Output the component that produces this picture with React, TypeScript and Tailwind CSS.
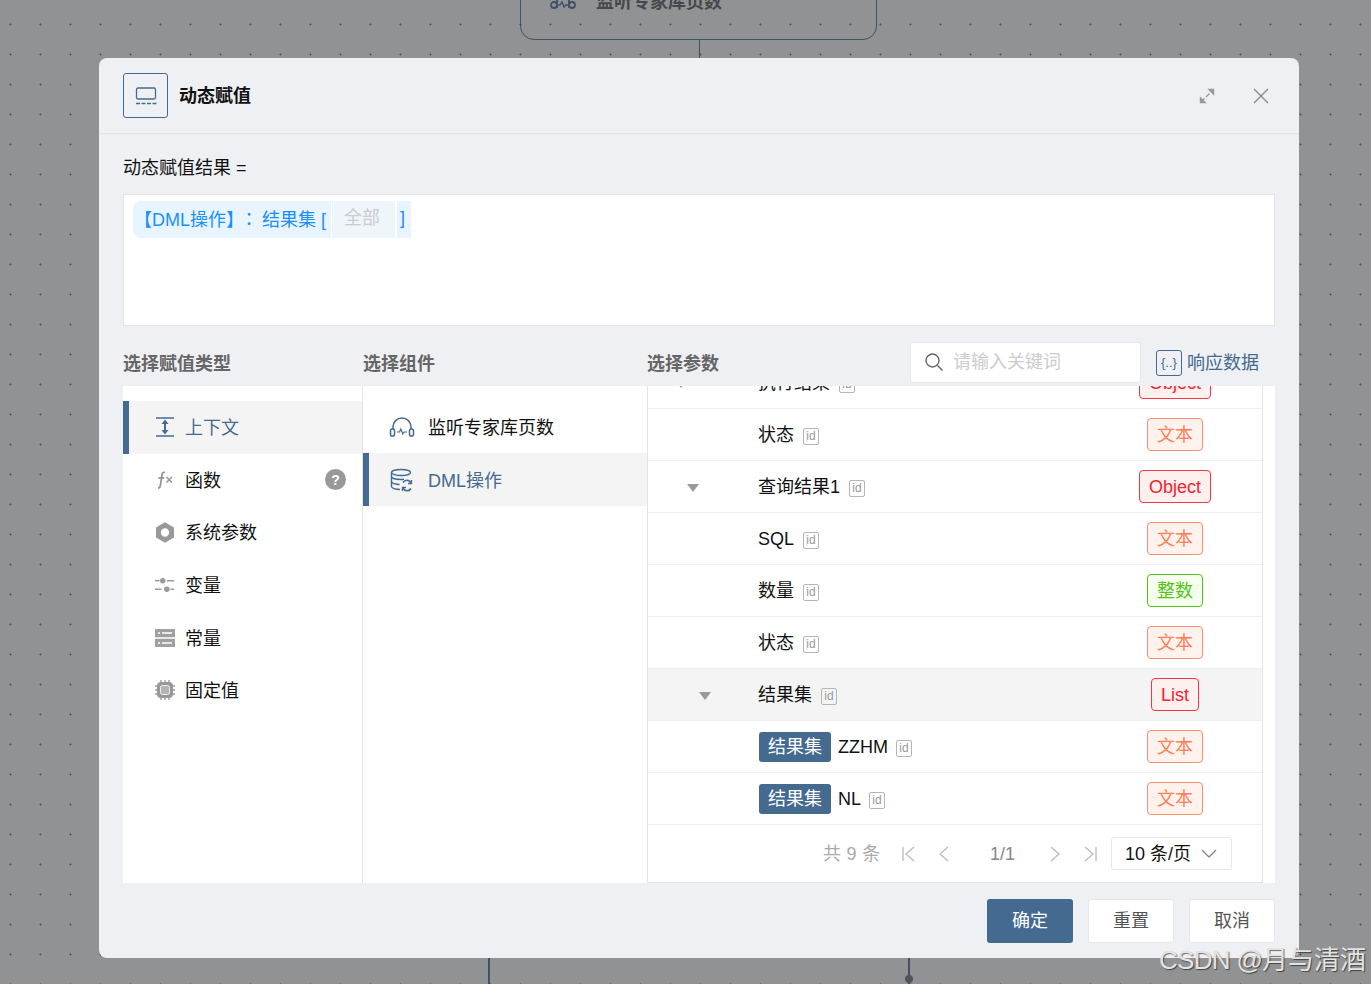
import React from 'react';

type TagKind = 'text' | 'object' | 'int' | 'list';

interface Row {
  name: string;
  tag: TagKind;
  arrow?: 'a' | 'b' | 'c';
  prefix?: boolean;
  active?: boolean;
}

const rows: Row[] = [
  { name: '执行结果', tag: 'object', arrow: 'a' },
  { name: '状态', tag: 'text' },
  { name: '查询结果1', tag: 'object', arrow: 'b' },
  { name: 'SQL', tag: 'text' },
  { name: '数量', tag: 'int' },
  { name: '状态', tag: 'text' },
  { name: '结果集', tag: 'list', arrow: 'c', active: true },
  { name: 'ZZHM', tag: 'text', prefix: true },
  { name: 'NL', tag: 'text', prefix: true },
];

const tagClass: Record<TagKind, string> = {
  text: 'w-14 border-[#ff8f6b] bg-[#fff2ec] text-[#ff7f57]',
  object: 'w-[72px] border-[#f5363f] bg-[#fff0f0] text-[#f5222d]',
  int: 'w-14 border-[#52c41a] bg-[#f6ffed] text-[#52c41a]',
  list: 'w-12 border-[#f5363f] bg-[#fff0f0] text-[#f5222d]',
};

const tagLabel: Record<TagKind, string> = { text: '文本', object: 'Object', int: '整数', list: 'List' };

const arrowPad = { a: 'pl-[27px]', b: 'pl-[39px]', c: 'pl-[51px]' };

const IdIcon = () => (
  <span className="ml-2 mt-[3px] inline-flex h-[17px] w-4 items-center justify-center rounded-[2px] border-[1.5px] border-[#b5b5b5] text-xs leading-none text-[#999]">
    id
  </span>
);

const TypeIcon = ({ name }: { name: string }) => {
  if (name === 'context')
    return (
      <svg width="20" height="22" viewBox="0 0 20 22" fill="none" stroke="#446a90" strokeWidth="1.700">
        <path d="M1 2h18M1 20h18" />
        <path d="M10 6v10" strokeWidth="2" />
        <path d="M6.500 8 10 3.500 13.500 8zM6.500 14l3.500 4.500 3.500-4.500z" fill="#446a90" stroke="none" />
      </svg>
    );
  if (name === 'fx')
    return (
      <svg width="20" height="20" viewBox="0 0 20 20" fill="none" stroke="#999" strokeWidth="1.800">
        <path d="M10 2.500C8 1.800 7.300 3 7 5L5.500 15c-.3 2-1 3-2.500 3M3.500 8H9" />
        <path d="m11.500 7 5.500 5.500M17 7l-5.500 5.500" strokeWidth="1.600" />
      </svg>
    );
  if (name === 'hex')
    return (
      <svg width="20" height="21" viewBox="0 0 20 21">
        <path fillRule="evenodd" fill="#999" d="m10 .3 9 5.200v10l-9 5.200-9-5.200v-10zM10 6.300a4.200 4.200 0 1 0 0 8.400 4.200 4.200 0 0 0 0-8.400z" />
      </svg>
    );
  if (name === 'slider')
    return (
      <svg width="22" height="20" viewBox="0 0 22 20" fill="none" stroke="#999" strokeWidth="1.800">
        <path d="M0 5.300h5M13 5.300h8M0 14.700h7M17 14.700h4" />
        <circle cx="8.500" cy="5.300" r="3" fill="#999" stroke="none" />
        <circle cx="13" cy="14.700" r="3" fill="#999" stroke="none" />
      </svg>
    );
  if (name === 'server')
    return (
      <svg width="20" height="18" viewBox="0 0 20 18">
        <path fill="#a0a0a0" d="M0 0h20v8.300H0zM0 9.700h20V18H0z" />
        <path stroke="#fff" strokeWidth="1.500" d="M3 4h2M7 4h10M3 14h2M7 14h10" />
      </svg>
    );
  return (
    <svg width="20" height="20" viewBox="0 0 20 20" fill="none">
      <path stroke="#999" strokeWidth="1.300" d="M6 0v3M10 0v3M14 0v3M6 17v3M10 17v3M14 17v3M0 6h3M0 10h3M0 14h3M17 6h3M17 10h3M17 14h3" />
      <rect x="2" y="2" width="16" height="16" rx="4" fill="#999" />
      <rect x="5.500" y="5.500" width="9" height="9" rx="2" fill="#b5b5b5" stroke="#eee" />
    </svg>
  );
};

const types = [
  { icon: 'context', label: '上下文', active: true },
  { icon: 'fx', label: '函数', help: true },
  { icon: 'hex', label: '系统参数' },
  { icon: 'slider', label: '变量' },
  { icon: 'server', label: '常量' },
  { icon: 'chip', label: '固定值' },
];

const App: React.FC = () => {
  return (
    <div className="relative h-[984px] w-full overflow-hidden bg-[#919294] bg-[radial-gradient(circle_at_10.5px_24.5px,#505256_0.8px,transparent_1.2px)] bg-[length:30px_30px] [font-family:'Liberation_Sans','Noto_Sans_CJK_SC',sans-serif]">
      {/* canvas behind the dialog */}
      <div className="absolute left-[520px] top-[-30px] flex h-[70px] w-[357px] items-end gap-[20px] rounded-b-[14px] border border-[#3f5167] pb-[28px] pl-[29px]">
        <svg width="26" height="14" viewBox="0 0 26 14" fill="none" stroke="#3f5167" strokeWidth="1.800">
          <path d="M1 8a3 3 0 1 0 6 0 3 3 0 0 0-6 0zM7 0v11M25 8a3 3 0 1 1-6 0 3 3 0 0 1 6 0zM19 0v11" />
          <path d="M8 8h2l2-3 2 5 2-2h2" strokeWidth="1.300" />
        </svg>
        <span className="text-lg font-bold leading-none text-[#45484d]">监听专家库页数</span>
      </div>
      <div className="absolute left-[699px] top-[40px] h-[18px] w-px bg-[#3f5167]" />
      <div className="absolute left-[488px] top-[958px] h-[26px] w-0.5 bg-[#3f5167]" />
      <div className="absolute left-[908px] top-[958px] h-[26px] w-0.5 bg-[#3f5167]" />
      <div className="absolute left-[905px] top-[975px] h-2 w-2 rounded-full bg-[#50535a]" />

      {/* dialog */}
      <div className="absolute left-[99px] top-[58px] flex h-[900px] w-[1200px] flex-col rounded-lg bg-[#eff0f4]">
        <div className="flex h-[76px] shrink-0 items-center border-b border-[#e3e4e8] pl-6 pr-[29px]">
          <div className="flex h-[45px] w-[45px] items-center justify-center rounded-[3px] border border-[#446a90]">
            <svg width="22" height="18" viewBox="0 0 22 18" fill="none" stroke="#446a90">
              <rect x="1.500" y="1" width="19" height="11" rx="1.500" strokeWidth="1.300" />
              <path d="M1 16.500h4M6.500 16.500h4M12 16.500h4M17.500 16.500h4" strokeWidth="1.500" />
            </svg>
          </div>
          <span className="ml-[11px] text-lg font-bold text-[#111]">动态赋值</span>
          <div className="ml-auto flex items-center gap-9">
            <svg width="18" height="18" viewBox="0 0 18 18" fill="none" stroke="#999" strokeWidth="1.400">
              <path d="M3 15 15 3" strokeDasharray="5 2" />
              <path d="M11 2.500h4.500V7L11 2.500zM7 15.500H2.500V11L7 15.500z" fill="#999" />
            </svg>
            <svg width="18" height="18" viewBox="0 0 18 18" fill="none" stroke="#888" strokeWidth="1.300">
              <path d="m2 2 14 14M16 2 2 16" />
            </svg>
          </div>
        </div>

        <div className="flex min-h-0 flex-1 flex-col px-6">
          <div className="mt-[24px] text-lg leading-[20px] text-[#111]">动态赋值结果 =</div>
          <div className="mt-[16px] h-[132px] shrink-0 border border-[#e3e4e8] bg-white pl-[9px] pt-[6px]">
            <div className="flex h-[37px] text-lg leading-[35px] text-[#1890ff] [text-spacing-trim:space-all]">
              <span className="w-[198px] whitespace-pre rounded-l-lg bg-[#e8f4ff] pl-px">
                【DML操作】<span className="-ml-[4px] mr-[4px] inline-block [font-family:'Noto_Sans_CJK_JP',sans-serif]">：</span>结果集 [
              </span>
              <span className="ml-px w-[63px] bg-[#eef5fb] pr-[3px] text-center text-[#ccc]">全部</span>
              <span className="ml-0.5 w-[14px] bg-[#e8f4ff] pl-[3px]">]</span>
            </div>
          </div>

          <div className="mt-[15px] flex h-[45px] shrink-0 items-center">
            <span className="w-[240px] text-lg font-bold text-[#666]">选择赋值类型</span>
            <span className="w-[284px] text-lg font-bold text-[#666]">选择组件</span>
            <span className="w-[263px] text-lg font-bold text-[#666]">选择参数</span>
            <div className="mb-[2px] flex h-[41px] w-[231px] items-center rounded-[3px] border border-[#e6e7ea] bg-white pb-px pl-[13px]">
              <svg width="20" height="20" viewBox="0 0 20 20" fill="none" stroke="#666" strokeWidth="1.400">
                <circle cx="8.500" cy="8.500" r="6.500" />
                <path d="m13.500 13.500 5 5" />
              </svg>
              <span className="ml-[9px] text-lg text-[#ccc]">请输入关键词</span>
            </div>
            <div className="mb-[2px] ml-[15px] flex h-[26px] w-[26px] items-center justify-center rounded-[3px] border border-[#446a90] text-[13px] leading-none text-[#446a90]">
              {'{..}'}
            </div>
            <span className="mb-[2px] ml-[5px] text-lg text-[#446a90]">响应数据</span>
          </div>

          <div className="flex h-[497px] shrink-0">
            <div className="w-[240px] border-r border-[#e3e4e8] bg-white pt-[15px]">
              {types.map((t) => (
                <div
                  key={t.label}
                  className={`flex h-[52.6px] items-center border-l-[6px] pl-[26px] ${t.active ? 'border-[#446a90] bg-[#f4f4f5]' : 'border-transparent'}`}
                >
                  <span className="flex w-[20px] justify-center">
                    <TypeIcon name={t.icon} />
                  </span>
                  <span className={`ml-[10px] pt-[2px] text-lg ${t.active ? 'text-[#446a90]' : 'text-[#111]'}`}>{t.label}</span>
                  {t.help && (
                    <span className="ml-auto mr-[16px] flex h-[21px] w-[21px] items-center justify-center rounded-full bg-[#999] text-sm font-bold text-white">
                      ?
                    </span>
                  )}
                </div>
              ))}
            </div>

            <div className="w-[285px] border-r border-[#e3e4e8] bg-white pt-[15px]">
              <div className="flex h-[52px] items-center pl-[26px]">
                <svg width="26" height="22" viewBox="0 0 26 22" fill="none" stroke="#446a90" strokeWidth="1.500">
                  <path d="M4 13V11a9 9 0 0 1 18 0v2" />
                  <rect x="1.500" y="13" width="4" height="7" rx="1.800" />
                  <rect x="20.500" y="13" width="4" height="7" rx="1.800" />
                  <path d="M8 16h2.500l1.300-3 2 5 1.300-2H18" strokeWidth="1.200" />
                </svg>
                <span className="ml-[13px] pt-[2px] text-lg text-[#111]">监听专家库页数</span>
              </div>
              <div className="flex h-[53px] items-center border-l-[6px] border-[#446a90] bg-[#f4f4f5] pl-[21px]">
                <svg width="24" height="24" viewBox="0 0 24 24" fill="none" stroke="#446a90" strokeWidth="1.400">
                  <ellipse cx="11" cy="4.500" rx="9.500" ry="3" />
                  <path d="M1.500 4.500v4c0 1.700 4 3 9.500 3 1 0 2-.1 3-.2M1.500 8.500v5c0 1.700 4 3 8 3M1.500 13.500v5c0 1.700 4 3 8.500 3" />
                  <path d="M21 15a4.500 4.500 0 0 0-8-.5M13 20a4.500 4.500 0 0 0 8 .5" strokeWidth="1.600" />
                  <path d="M21.500 12v3.500H18M12.500 23v-3.500H16" strokeWidth="1.300" />
                </svg>
                <span className="ml-[14px] pt-[2px] text-lg text-[#446a90]">DML操作</span>
              </div>
            </div>

            <div className="flex flex-1 bg-white">
              <div className="flex w-[615px] flex-col border-r border-b border-[#e3e4e8]">
                <div className="h-[439px] overflow-hidden">
                  <div className="-mt-[29px]">
                    {rows.map((r, i) => (
                      <div key={i} className={`flex h-[52px] items-center border-b border-[#eeeff0] ${r.active ? 'bg-[#f4f4f5]' : ''}`}>
                        <div className={`w-[111px] ${r.arrow ? arrowPad[r.arrow] : ''}`}>
                          {r.arrow && (
                            <svg width="12" height="8" viewBox="0 0 12 8" className="mt-0.5 block">
                              <path d="M0 0h12L6 8z" fill="#999" />
                            </svg>
                          )}
                        </div>
                        <div className="flex flex-1 items-center">
                          {r.prefix && (
                            <span className="mr-[7px] flex h-[30px] w-[72px] items-center justify-center rounded-[3px] bg-[#446a90] text-lg text-white">
                              结果集
                            </span>
                          )}
                          <span className={`text-lg text-[#111] ${r.prefix ? '' : '-ml-px mr-px'}`}>{r.name}</span>
                          <IdIcon />
                        </div>
                        <div className="flex w-[174px] justify-center">
                          <span className={`flex h-[33px] items-center justify-center rounded-[4px] border text-lg ${tagClass[r.tag]}`}>
                            {tagLabel[r.tag]}
                          </span>
                        </div>
                      </div>
                    ))}
                  </div>
                </div>
                <div className="flex flex-1 items-center pl-[175px] text-[#aaa]">
                  <span className="w-[67px] text-lg tracking-[0.3px]">共 9 条</span>
                  <svg width="16" height="16" viewBox="0 0 16 16" fill="none" stroke="#bbb" strokeWidth="1.300" className="ml-[11px]">
                    <path d="M2 1v14M13 1 5 8l8 7" />
                  </svg>
                  <svg width="16" height="16" viewBox="0 0 16 16" fill="none" stroke="#bbb" strokeWidth="1.300" className="ml-[20px]">
                    <path d="m11 1-8 7 8 7" />
                  </svg>
                  <span className="ml-[37px] w-[25px] text-lg leading-[22px] text-[#888]">1/1</span>
                  <svg width="16" height="16" viewBox="0 0 16 16" fill="none" stroke="#bbb" strokeWidth="1.300" className="ml-[31px]">
                    <path d="m5 1 8 7-8 7" />
                  </svg>
                  <svg width="16" height="16" viewBox="0 0 16 16" fill="none" stroke="#bbb" strokeWidth="1.300" className="ml-[20px]">
                    <path d="M14 1v14M3 1l8 7-8 7" />
                  </svg>
                  <div className="ml-[13px] flex h-[33px] w-[121px] items-center rounded-[3px] border border-[#e6e7ea] pl-[13px] text-lg text-[#111]">
                    10 条/页
                    <svg width="16" height="10" viewBox="0 0 16 10" fill="none" stroke="#888" strokeWidth="1.300" className="ml-[10px]">
                      <path d="m1 1 7 7 7-7" />
                    </svg>
                  </div>
                </div>
              </div>
            </div>
          </div>

          <div className="mt-4 flex justify-end gap-[15px]">
            <button className="h-[44px] w-[86px] rounded-[3px] bg-[#446a90] text-lg text-white">确定</button>
            <button className="h-[44px] w-[86px] rounded-[3px] border border-[#e6e7ea] bg-white text-lg text-[#555]">重置</button>
            <button className="h-[44px] w-[86px] rounded-[3px] border border-[#e6e7ea] bg-white text-lg text-[#555]">取消</button>
          </div>
        </div>
      </div>

      <span className="absolute left-[1159px] top-[943px] whitespace-nowrap text-[26px] leading-[34px] text-[#e3e3e3] [text-shadow:1px_1px_1px_rgba(0,0,0,0.55)]">
        <span className="tracking-[-0.7px]">CSDN @</span>月与清酒
      </span>
    </div>
  );
};

export default App;
